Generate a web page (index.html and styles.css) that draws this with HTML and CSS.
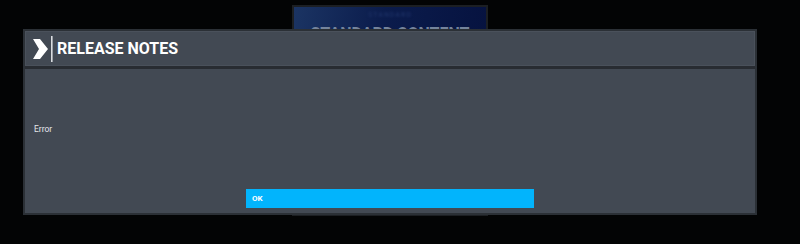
FILE: index.html
```html
<!DOCTYPE html>
<html lang="en">
<head>
<meta charset="UTF-8">
<meta name="viewport" content="width=device-width, initial-scale=1.0">
<title>Release Notes</title>
<link rel="stylesheet" href="styles.css">
</head>
<body>
  <div class="scene">
    <div class="tile">
      <div class="tile-art">
        <span class="tile-kicker">STANDARD</span>
        <span class="tile-title">STANDARD CONTENT</span>
      </div>
    </div>
  </div>

  <div class="dialog">
    <div class="dialog-head">
      <svg class="head-icon" width="22" height="26" viewBox="0 0 22 26">
        <polygon points="1,3 8,3 16,13 8,23 1,23 7,13" fill="#ffffff"/>
        <rect x="19" y="0" width="1.6" height="26" fill="#d9dce0"/>
      </svg>
      <h1>RELEASE NOTES</h1>
    </div>
    <div class="dialog-body">
      <div class="message">Error</div>
      <button class="ok-btn">OK</button>
    </div>
  </div>
</body>
</html>
```

FILE: styles.css
```css
body {
  margin: 0;
  padding: 0;
  background-color: #030405;
  font-family: 'Roboto', 'Liberation Sans', sans-serif;
  width: 800px;
  height: 244px;
  overflow: hidden;
  position: relative;
}

.scene {
  padding-top: 5px;
  padding-left: 292px;
}

.tile {
  width: 192px;
  height: 207px;
  border: 2px solid #1c1f23;
  background: #15181c;
}

.tile-art {
  height: 60px;
  background: linear-gradient(100deg, #1b3463 0%, #0b1c4c 45%, #06123f 100%);
  display: flex;
  flex-direction: column;
  align-items: center;
}

.tile-kicker {
  margin-top: 4px;
  font-size: 7px;
  font-weight: bold;
  color: #1a2e62;
  letter-spacing: 1px;
  filter: blur(1px);
}

.tile-title {
  margin-top: 5px;
  font-size: 16px;
  font-weight: bold;
  color: #75849c;
}

/* modal over the content */
.dialog {
  position: absolute;
  left: 23px;
  top: 29px;
  width: 734px;
  height: 186px;
  box-sizing: border-box;
  border: 2px solid #2b3036;
  background: #282c32;
  display: flex;
  flex-direction: column;
}

.dialog-head {
  height: 35px;
  box-sizing: border-box;
  background: #424953;
  border: 1px solid #4a515b;
  display: flex;
  align-items: center;
  padding-left: 6px;
}

.head-icon {
  display: block;
  margin-right: 3px;
}

.dialog-head h1 {
  margin: 0;
  font-size: 16px;
  font-weight: bold;
  color: #ffffff;
}

.dialog-body {
  flex: 1;
  margin-top: 3px;
  background: #424953;
  display: flex;
  flex-direction: column;
  align-items: center;
  padding-bottom: 5px;
}

.message {
  flex: 1;
  align-self: stretch;
  display: flex;
  align-items: center;
  padding-left: 9px;
  font-size: 8.5px;
  color: #e4e6ea;
}

.ok-btn {
  width: 288px;
  height: 19px;
  border: none;
  background-color: #02b4fc;
  color: #fff;
  font-family: 'Roboto', 'Liberation Sans', sans-serif;
  font-size: 8px;
  font-weight: bold;
  text-align: left;
  padding: 0 6px;
  cursor: pointer;
}
```
